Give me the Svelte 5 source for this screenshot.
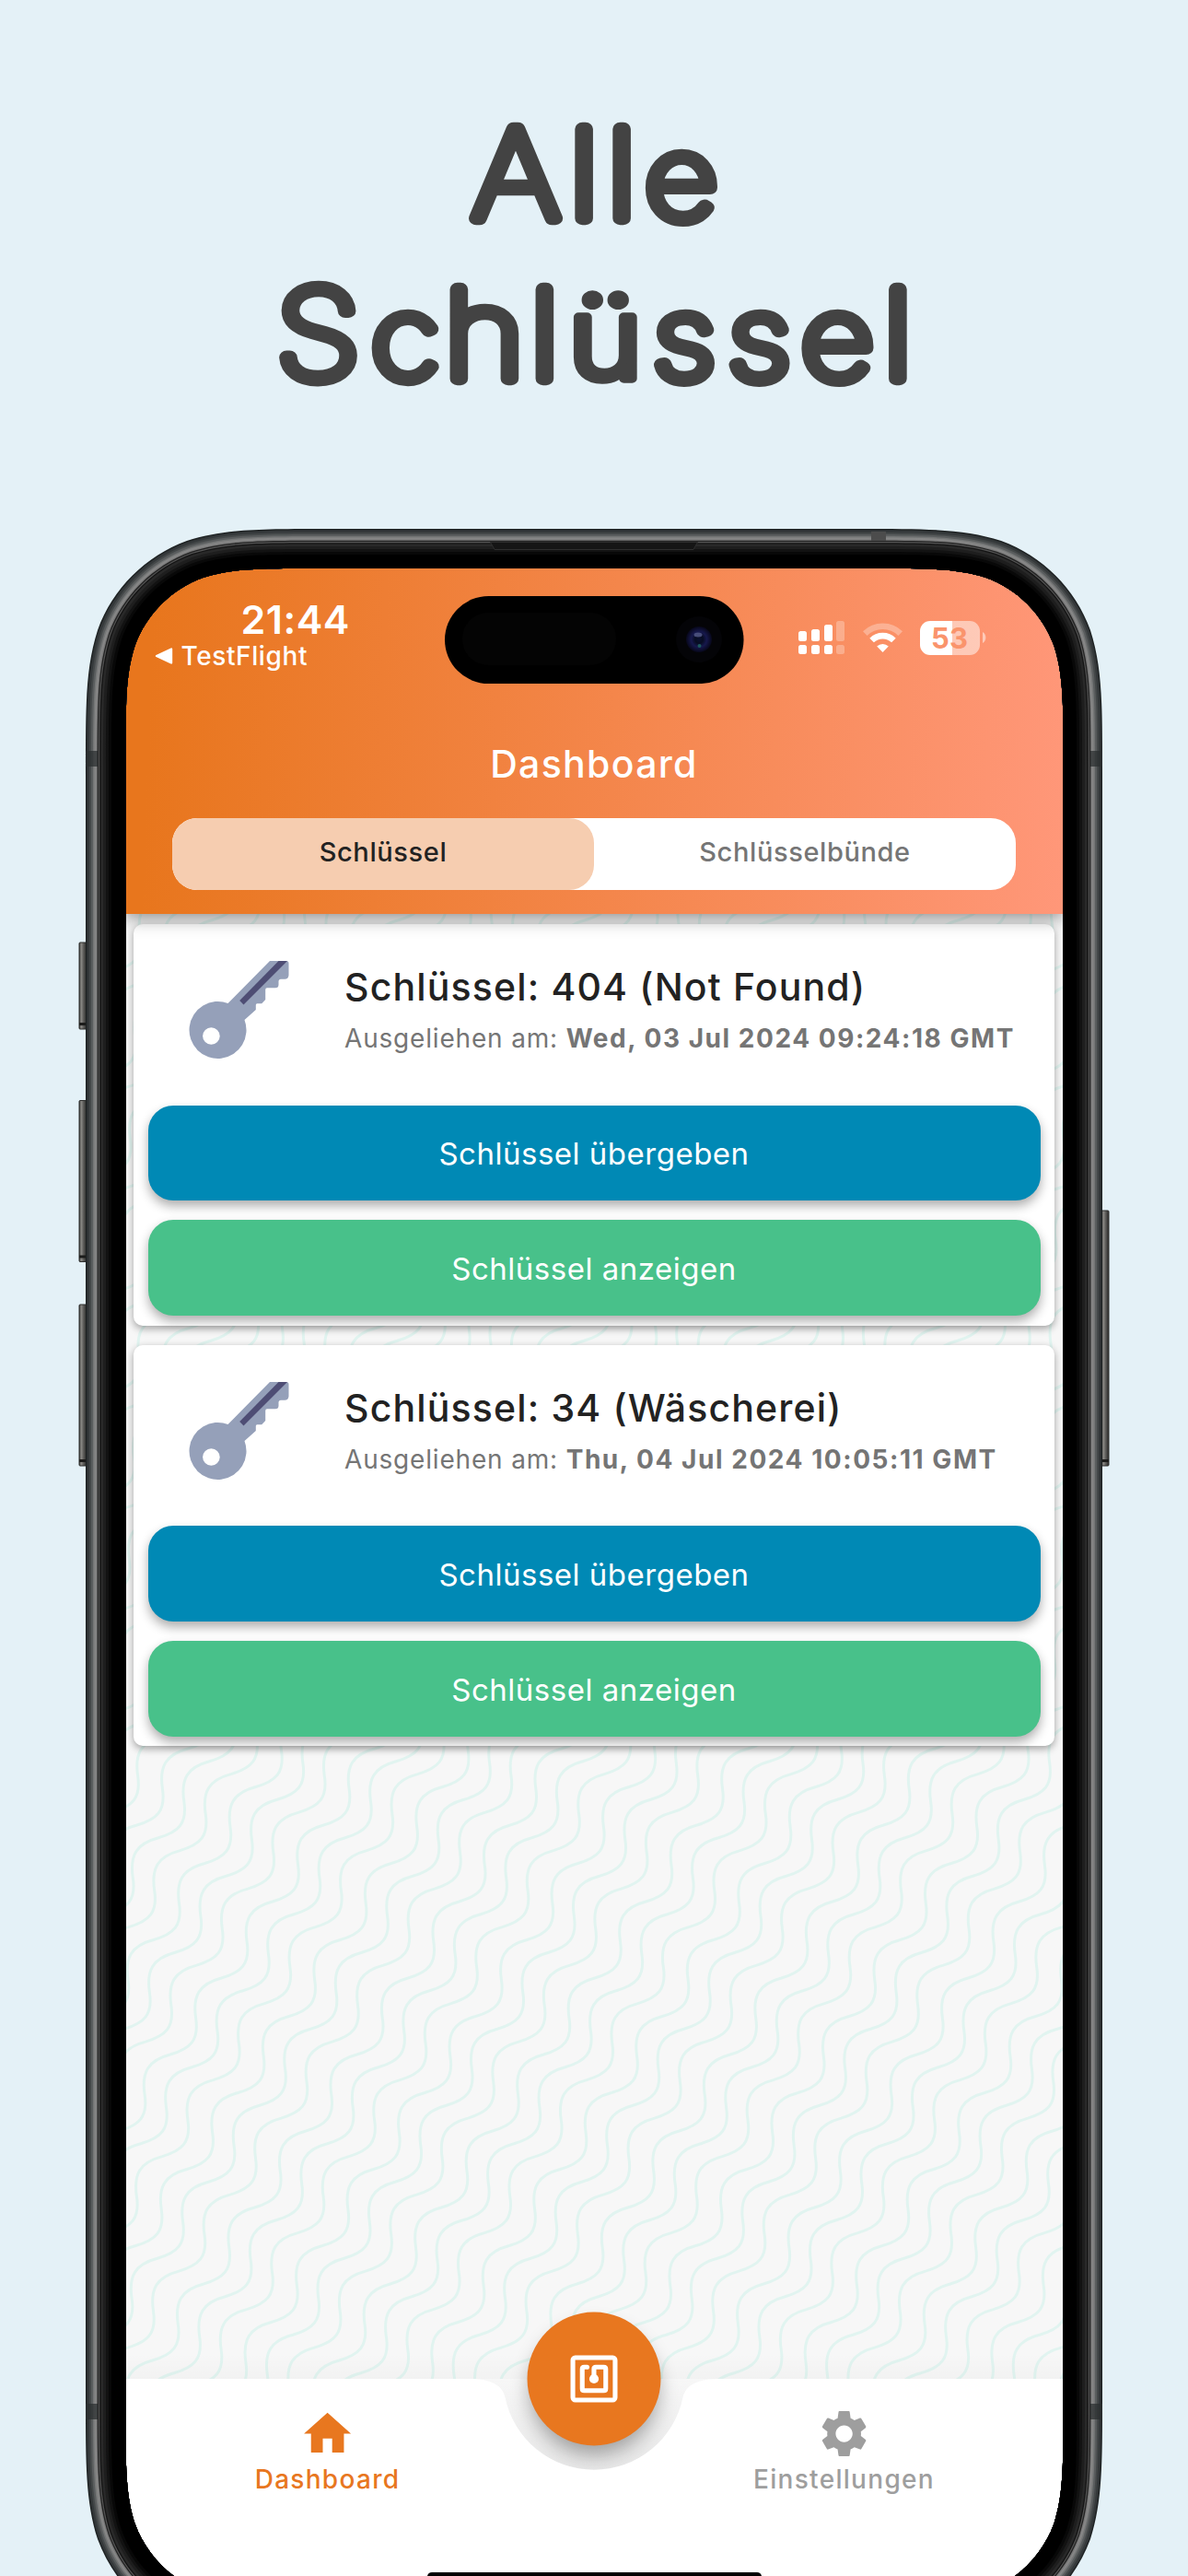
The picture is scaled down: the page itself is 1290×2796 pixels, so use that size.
<script>
  const keys = [
    { title: 'Schlüssel: 404 (Not Found)', date: 'Wed, 03 Jul 2024 09:24:18 GMT' },
    { title: 'Schlüssel: 34 (Wäscherei)', date: 'Thu, 04 Jul 2024 10:05:11 GMT' }
  ];

  // Rounded rectangle with continuous (iOS style) corners.
  function squircle(x, y, w, h, r) {
    const a = 1.528665 * r, b = 1.088493 * r, c = 0.868407 * r;
    const d = 0.631494 * r, e = 0.074911 * r, f = 0.372824 * r, g = 0.16906 * r;
    const X = x + w, Y = y + h;
    return [
      `M${x + a} ${y}H${X - a}`,
      `C${X - b} ${y} ${X - c} ${y} ${X - d} ${y + e}`,
      `C${X - f} ${y + g} ${X - g} ${y + f} ${X - e} ${y + d}`,
      `C${X} ${y + c} ${X} ${y + b} ${X} ${y + a}`,
      `V${Y - a}`,
      `C${X} ${Y - b} ${X} ${Y - c} ${X - e} ${Y - d}`,
      `C${X - g} ${Y - f} ${X - f} ${Y - g} ${X - d} ${Y - e}`,
      `C${X - c} ${Y} ${X - b} ${Y} ${X - a} ${Y}`,
      `H${x + a}`,
      `C${x + b} ${Y} ${x + c} ${Y} ${x + d} ${Y - e}`,
      `C${x + f} ${Y - g} ${x + g} ${Y - f} ${x + e} ${Y - d}`,
      `C${x} ${Y - c} ${x} ${Y - b} ${x} ${Y - a}`,
      `V${y + a}`,
      `C${x} ${y + b} ${x} ${y + c} ${x + e} ${y + d}`,
      `C${x + g} ${y + f} ${x + f} ${y + g} ${x + d} ${y + e}`,
      `C${x + c} ${y} ${x + b} ${y} ${x + a} ${y}Z`
    ].join('');
  }

  // Metal band from its outer edge to the black bezel: [inset, colour].
  const shades = [
    [0, '#1f2324'], [1.5, '#34383a'], [4, '#444849'], [6, '#5a5d5e'], [8, '#747676'],
    [9.5, '#868686'], [11.5, '#777'], [12.7, '#232323'], [14, '#555'], [15.2, '#141414'],
    [16.5, '#292929'], [19, '#1e1e1e'], [22, '#121212'], [25, '#080808'], [28, '#000']
  ];
  const hole = squircle(43.5, 43, 1018, 2206, 133);
  const rings = shades.map(([i, color]) => ({
    color,
    d: squircle(i, i, 1104 - 2 * i, 2292 - 2 * i, 174 - i) + hole
  }));

  const sideKeys = [
    { x: -7, y: 449, h: 94 }, { x: -7, y: 620.5, h: 175 }, { x: -7, y: 842, h: 175 },
    { x: 1103, y: 740, h: 277 }
  ];

  // Wavy background lines, drawn in groups of three.
  const period = 'c-3.5-24 3-37 27.7-43.5c22-6.5 31.500-15.500 27.800-39.500';
  const waves = [];
  for (let j = -26; j <= 26; j++) {
    for (let k = 0; k < 3; k++) {
      const x0 = 114 + j * 73.6 + k * 23.4 - 55.5 * 16;
      const y0 = 991 + j * 41.5 + k * 13.8 + 83 * 16;
      waves.push(`M${x0.toFixed(1)} ${y0.toFixed(1)}${period.repeat(33)}`);
    }
  }
</script>

<main>
  <h1>
    <svg class="headline" viewBox="0 0 1290 574" width="1290" height="574">
      <g transform="scale(1.12 1)">
        <text y="237" x="457.4 551.7 588.3 625.2">All<tspan class="low">e</tspan></text>
        <text y="410.7" x="267.7 359.8 430.6 513.7 550.6 633.1 705.9 776.6 856.1">S<tspan class="low">c</tspan>hl<tspan class="low umlaut">ü</tspan><tspan class="low">sse</tspan>l</text>
      </g>
    </svg>
  </h1>

  <div class="phone">
    <div class="screen">
      <header>
        <div class="status">
          <div class="clock">
            <div class="time">21:44</div>
            <div class="back">
              <svg width="20" height="18" viewBox="0 0 20 18"><path d="M18 1.6v14.8L2 9z" fill="#fff" stroke="#fff" stroke-width="2.4" stroke-linejoin="round" /></svg>
              <span>TestFlight</span>
            </div>
          </div>
          <div class="indicators">
            <svg width="50" height="36" viewBox="0 0 50 36" fill="#fff">
              <rect x="0" y="11" width="9" height="11" rx="2.5" /><rect x="14" y="9" width="9" height="13" rx="2.5" />
              <rect x="28" y="4" width="9" height="18" rx="2.5" /><rect x="41" y="0" width="9" height="22" rx="2.5" opacity=".28" />
              <rect x="0" y="26" width="9" height="10" rx="2.5" /><rect x="14" y="26" width="9" height="10" rx="2.5" />
              <rect x="28" y="26" width="9" height="10" rx="2.5" /><rect x="41" y="26" width="9" height="10" rx="2.5" opacity=".28" />
            </svg>
            <svg class="wifi" width="43" height="33" viewBox="0 0 43 33">
              <g fill="none" stroke="#fff" stroke-width="6.6">
                <path d="M2.3 11.6a27.5 27.5 0 0 1 38.4 0" opacity=".3" />
                <path d="M9.6 19a17 17 0 0 1 23.8 0" />
              </g>
              <path d="M21.5 32l-6.3-6.4a9 9 0 0 1 12.6 0z" fill="#fff" />
            </svg>
            <div class="battery"><span>53</span></div>
            <svg width="4" height="12" viewBox="0 0 4 12"><path d="M0 0a7 7 0 0 1 0 12z" fill="#fff" opacity=".5" /></svg>
          </div>
        </div>
        <h2>Dashboard</h2>
        <div class="tabs">
          <div class="tab active">Schlüssel</div>
          <div class="tab">Schlüsselbünde</div>
        </div>
      </header>

      <section>
        <svg class="waves" width="1018" height="1590" viewBox="0 0 1018 1590">
          {#each waves as d}<path {d} />{/each}
        </svg>
        <div class="list">
          {#each keys as key}
            <article>
              <div class="summary">
                <svg width="109" height="106" viewBox="0 0 109 106">
                  <path d="M88 0H106a2.5 2.5 0 0 1 2.5 2.5V15.5a4.5 4.5 0 0 1-4.5 4.2h-4q-2.5 0-2.5 2.5v3.5a3.5 3.5 0 0 1-3.5 3.5h-9q-1.8 0-1.8 2V42l-4 4.3h-5q-1.4 0-1.4 1.5V53L60.5 64a31 31 0 1 1-18-18z" fill="#95A0B9" />
                  <path d="M97.5 0h9.5L59.5 47.5l-4.3-4.5z" fill="#4E4D74" />
                  <circle cx="24.4" cy="81.5" r="9.3" fill="#fff" />
                </svg>
                <div>
                  <h3>{key.title}</h3>
                  <p>Ausgeliehen am: <b>{key.date}</b></p>
                </div>
              </div>
              <button class="blue">Schlüssel übergeben</button>
              <button class="green">Schlüssel anzeigen</button>
            </article>
          {/each}
        </div>
      </section>

      <nav>
        <svg class="bar" width="1018" height="241" viewBox="0 0 1018 241">
          <defs>
            <linearGradient id="notch" x1="0" y1="0" x2="0" y2="1">
              <stop offset="0" stop-color="#f7f7f7" /><stop offset="1" stop-color="#e8e8e8" />
            </linearGradient>
            <linearGradient id="lift" x1="0" y1="0" x2="0" y2="1">
              <stop offset="0" stop-color="#000" stop-opacity="0" /><stop offset="1" stop-color="#000" stop-opacity=".02" />
            </linearGradient>
            <filter id="soft" x="-50%" y="-50%" width="200%" height="200%"><feGaussianBlur stdDeviation="11" /></filter>
          </defs>
          <rect x="0" y="-28" width="1018" height="28" fill="url(#lift)" />
          <rect x="370" y="0" width="280" height="102" fill="url(#notch)" />
          <circle cx="509" cy="13" r="69" fill="#000" opacity=".34" filter="url(#soft)" />
          <path d="M0 0H374Q408 0 412.5 20A98.5 98.5 0 0 0 605.5 20Q610 0 644 0H1018V241H0z" fill="#fff" />
          <circle cx="509" cy="0" r="72.5" fill="#E8771F" />
          <g fill="none" stroke="#fff" stroke-width="5.1" stroke-linecap="round" stroke-linejoin="round">
            <rect x="486.05" y="-22.95" width="45.9" height="45.9" rx="2.6" />
            <path d="M501.5 -12.75h-3.2q-2.05 0-2.05 2.05v21.4q0 2.05 2.05 2.05h21.4q2.05 0 2.05-2.05v-21.4q0-2.05-2.05-2.05h-8.7q-2.05 0-2.05 2.05V0" />
          </g>
          <circle cx="509" cy="0" r="5.1" fill="#fff" />
        </svg>
        <a class="item current" href="#dashboard">
          <svg width="61.2" height="61.2" viewBox="0 0 24 24"><path d="M10 20v-6h4v6h5v-8h3L12 3 2 12h3v8z" /></svg>
          <span>Dashboard</span>
        </a>
        <a class="item" href="#einstellungen">
          <svg width="61.2" height="61.2" viewBox="0 0 24 24"><path d="M19.14 12.94c.04-.3.06-.61.06-.94 0-.32-.02-.64-.07-.94l2.03-1.58c.18-.14.23-.41.12-.61l-1.92-3.32c-.12-.22-.37-.29-.59-.22l-2.39.96c-.5-.38-1.03-.7-1.62-.94l-.36-2.54c-.04-.24-.24-.41-.48-.41h-3.84c-.24 0-.43.17-.47.41l-.36 2.54c-.59.24-1.13.57-1.62.94l-2.39-.96c-.22-.08-.47 0-.59.22L2.74 8.87c-.12.21-.08.47.12.61l2.03 1.58c-.05.3-.09.63-.09.94s.02.64.07.94l-2.03 1.58c-.18.14-.23.41-.12.61l1.92 3.32c.12.22.37.29.59.22l2.39-.96c.5.38 1.03.7 1.62.94l.36 2.54c.05.24.24.41.48.41h3.84c.24 0 .44-.17.47-.41l.36-2.54c.59-.24 1.13-.56 1.62-.94l2.39.96c.22.08.47 0 .59-.22l1.92-3.32c.12-.22.07-.47-.12-.61l-2.01-1.58zM12 15.6c-1.98 0-3.6-1.62-3.6-3.6s1.62-3.6 3.6-3.6 3.6 1.62 3.6 3.6-1.62 3.6-3.6 3.6z" /></svg>
          <span>Einstellungen</span>
        </a>
      </nav>
    </div>

    <!-- Phone body drawn over the screen edges -->
    <svg class="frame" width="1104" height="2222" viewBox="0 0 1104 2222">
      <defs>
        <linearGradient id="key" x1="0" y1="0" x2="1" y2="0">
          <stop offset="0" stop-color="#2c2c2b" /><stop offset=".25" stop-color="#8d8c88" />
          <stop offset=".6" stop-color="#5a5957" /><stop offset="1" stop-color="#2a2a29" />
        </linearGradient>
        <radialGradient id="lens">
          <stop offset="0" stop-color="#0a1030" /><stop offset=".3" stop-color="#070c22" />
          <stop offset=".6" stop-color="#16184c" /><stop offset="1" stop-color="#07071a" />
        </radialGradient>
      </defs>
      {#each sideKeys as k}
        <rect x={k.x} y={k.y} width="8" height={k.h} rx="1" fill="url(#key)" stroke="#2e2e2d" stroke-width="1" />
        <rect x={k.x} y={k.y + k.h - 7} width="8" height="3" fill="#1c1c1b" />
      {/each}
      {#each rings as ring}<path d={ring.d} fill={ring.color} fill-rule="evenodd" />{/each}
      <rect x="853" y="3" width="16" height="10" fill="#4c4c4c" />
      <g fill="#2b2f30" opacity=".75">
        <rect x="0" y="241" width="13" height="17" /><rect x="1091" y="241" width="13" height="17" />
        <rect x="0" y="2035" width="13" height="17" /><rect x="1091" y="2035" width="13" height="17" />
      </g>
      <path d="M439.5 14.5H664.5L660 22.5H444z" fill="#151515" stroke="#2e2e2e" stroke-width="1" />
      <rect x="390" y="73" width="324.5" height="95" rx="47.5" />
      <rect x="409" y="91" width="167" height="57" rx="28" fill="#040404" />
      <circle cx="666" cy="120" r="25" fill="#040407" />
      <circle cx="666" cy="120" r="14" fill="url(#lens)" />
      <ellipse cx="665" cy="115" rx="4.5" ry="2.5" fill="#565c8c" opacity=".8" />
      <circle cx="666.5" cy="127" r="2" fill="#1d5a5c" />
      <path d="M371 2222q1-4 5-4H729q4 0 5 4z" />
    </svg>
  </div>
</main>

<style>
  :global(body) { background: #e4f1f7; }
  main {
    width: 1290px; height: 2796px; overflow: hidden; background: #e4f1f7;
    font-family: Inter, "Liberation Sans", sans-serif;
  }
  h1, h2, h3, p { margin: 0; font-weight: 450; }
  .headline {
    display: block; font-family: Inter, sans-serif; font-size: 133.5px; font-weight: 100;
    fill: #434343; stroke: #434343; stroke-width: 14.5px; stroke-linejoin: round;
  }
  .low { font-size: 123px; }
  .umlaut { font-weight: 300; stroke-width: 9.5px; }

  .phone {
    position: relative; box-sizing: border-box; width: 1104px; height: 2222px; margin-left: 92.5px;
    padding-top: 43px;
  }
  .frame { position: absolute; left: 0; top: 0; overflow: visible; }
  .screen {
    isolation: isolate; width: 1018px; height: 2206px; margin: 0 43.5px; border-radius: 100px;
    overflow: hidden; background: #f7f7f7;
  }

  header {
    position: relative; z-index: 2; height: 375px;
    background: linear-gradient(92deg, #e8761d 3%, #f4864b 52%, #ff9779 100%);
    box-shadow: 0 5px 18px rgba(0, 0, 0, .42);
  }
  .status { height: 150px; display: flex; justify-content: space-between; color: #fff; }
  .clock { padding: 33.5px 0 0 31.5px; }
  .time { margin-bottom: 1.5px; padding-left: 94px; font-size: 43px; line-height: 42px; font-weight: 600; letter-spacing: .5px; }
  .back { display: flex; align-items: center; gap: 9px; font-size: 28px; line-height: 36px; letter-spacing: .6px; }
  .back span { font-weight: 500; }
  .indicators { display: flex; align-items: center; height: 36px; padding: 57px 83.5px 0 0; }
  .wifi { margin: 0 19px 0 20px; }
  .battery {
    width: 65px; height: 37px; border-radius: 11px; margin-right: 3px; display: grid; place-items: center;
    background: linear-gradient(90deg, #fff 54%, rgba(255, 255, 255, .5) 54%);
    font-size: 31px; font-weight: 700; line-height: 37px; color: #fa946c;
  }
  h2 {
    margin: 37px 0 34px; font-size: 41px; line-height: 50px; letter-spacing: 1.3px;
    text-align: center; color: #fff;
  }
  .tabs {
    height: 78px; margin: 0 51px; border-radius: 27px; overflow: hidden; display: grid;
    grid-template-columns: 1fr 1fr; background: #fff;
  }
  .tab { font-size: 29px; font-weight: 475; line-height: 74px; letter-spacing: .6px; text-align: center; color: #757575; }
  .active { background: #f6cdb0; color: #222; border-radius: 27px; }

  section { position: relative; height: 1590px; }
  .waves { position: absolute; left: 0; top: 0; fill: none; stroke: #e1f4f0; stroke-width: 3; }
  .list { position: relative; padding: 11px 9px; display: grid; gap: 21.3px; }
  article {
    box-sizing: border-box; height: 435.5px; padding: 0 15.5px; border-radius: 10px; background: #fff;
    box-shadow: 0 3px 8px rgba(0, 0, 0, .36); display: flex; flex-direction: column;
  }
  .summary { display: flex; height: 196.7px; flex: none; }
  .summary svg { margin: 40px 60px 0 44.5px; flex: none; }
  h3 { margin: 43.3px 0 13px; font-size: 41px; line-height: 50px; letter-spacing: 1.15px; color: #222; white-space: nowrap; }
  p { font-size: 28px; line-height: 36px; letter-spacing: .82px; font-weight: 400; color: #757575; white-space: nowrap; }
  b { font-weight: 700; letter-spacing: 1.54px; }
  button {
    flex: none; height: 103.6px; margin: 0 0 21px; padding: 1.5px 0 0; border: 0; border-radius: 27px; color: #fff;
    font: 400 33px Inter, sans-serif; letter-spacing: .5px; box-shadow: 0 6px 12px rgba(0, 0, 0, .32);
  }
  .blue { background: #0089b5; }
  .green { background: #48c18a; margin: 0; }

  nav { position: relative; height: 241px; display: flex; gap: 368px; padding-left: 123px; }
  .bar { position: absolute; left: 0; top: 0; overflow: visible; }
  .item {
    position: relative; width: 193px; padding-top: 29px; display: flex; flex-direction: column; align-items: center;
    color: #9e9e9e; text-decoration: none; font-size: 28px; font-weight: 450; line-height: 36px; letter-spacing: 1.3px;
  }
  .item svg { fill: currentColor; flex: none; }
  .item span { margin-top: .8px; white-space: nowrap; }
  .current { color: #e8771f; }
</style>
